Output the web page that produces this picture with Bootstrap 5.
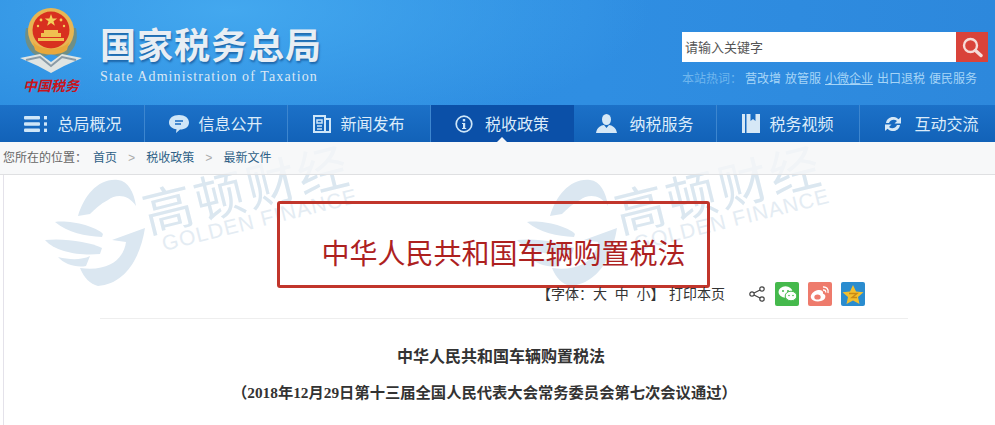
<!DOCTYPE html>
<html lang="zh">
<head>
<meta charset="UTF-8">
<meta name="viewport" content="width=device-width, initial-scale=1">
<title>国家税务总局</title>
<link href="https://cdn.jsdelivr.net/npm/bootstrap@5.3.3/dist/css/bootstrap.min.css" rel="stylesheet">
<style>
body { width: 995px; height: 425px; overflow: hidden; background: #fff; font-family: "Liberation Sans", "Noto Sans CJK SC", sans-serif; }
.site-head { height: 105px; padding: 8px 7px 0 20px; background: radial-gradient(ellipse 420px 130px at 230px 10px, #43a8ef 0%, rgba(67,168,239,0) 100%), linear-gradient(90deg, #2c8de0 0%, #2f8ee2 60%, #2d88dc 100%); }
.emblem-box { width: 62px; }
.emblem-cap { font: italic 700 14px/16px "Liberation Serif", "Noto Sans CJK SC", serif; color: #c8141c; white-space: nowrap; margin-left: 3px; margin-top: 6px; }
.brand-box { margin-left: 18px; padding-top: 19px; }
.brand-cn { font-size: 36px; line-height: 40px; font-weight: 700; letter-spacing: 1px; color: #e8eef4; text-shadow: 1px 2px 2px rgba(10,60,120,.55); white-space: nowrap; }
.brand-en { font: 14px/18px "Liberation Serif", serif; letter-spacing: 1.1px; color: #dbe8f4; margin-top: 1px; white-space: nowrap; }
.search-box { width: 306px; padding-top: 24px; }
.search-input { width: 274px; height: 30px; background: #fff; color: #555; font-size: 13px; line-height: 32px; padding-left: 3px; }
.search-btn { width: 32px; height: 30px; background: #d9433a; }
.hot-words { margin-top: 9px; font-size: 12px; line-height: 16px; color: #8cc6f2; white-space: nowrap; }
.hot-words .hot-title { margin-right: 3px; color: #6fb6ee; }
.hot-words a { color: #a6d5f7; text-decoration: none; margin-right: 4px; }
.hot-words a.hot-on { text-decoration: underline; }
.main-nav { position: relative; z-index: 1; height: 37px; padding-left: 2px; background: linear-gradient(#1c71c8, #1262b8); overflow: hidden; }
.nav-cell { flex: none; width: 143px; height: 37px; color: #dcecfa; font-size: 16px; border-right: 1px solid #3d86cf; white-space: nowrap; position: relative; padding-top: 3px; }
.nav-cell:last-child { border-right: 0; }
.nav-cell.is-on { background: #0b50a8; border-right-color: #0b50a8; }
.nav-cell.is-on::after { content: ""; position: absolute; left: 66px; bottom: 0; border: 5px solid transparent; border-bottom-color: #f5f6f8; border-top: 0; }
.nav-cell svg { margin-right: 9px; margin-top: -3px; flex: none; }
.nav-cell.gap-wide svg { margin-right: 12px; }
.page-body { position: relative; height: 283px; }
.water-mark { position: absolute; top: 8px; width: 330px; height: 150px; overflow: visible; pointer-events: none; }
.water-one { left: 40px; }
.water-two { left: 512px; }
.water-mark text { font-family: "Liberation Sans", "Noto Sans CJK SC", sans-serif; }
.crumb-bar { position: relative; height: 33px; background: rgba(245,246,248,.82); border-bottom: 1px solid #dfe0e2; font-size: 12px; line-height: 32px; padding-left: 3px; color: #666; white-space: nowrap; }
.crumb-bar a { color: #2d5f86; text-decoration: none; }
.crumb-bar i { font-style: normal; color: #aaa; margin: 0 11px; font-family: "Liberation Mono", monospace; }
.crumb-bar .crumb-lead { margin-right: 6px; }
.article-wrap { position: relative; margin-left: 3px; border-left: 1px solid #e4e2ea; padding-top: 26px; height: 250px; }
.law-box { width: 433px; height: 87px; margin-left: 273px; padding: 21px 0 0 20px; border: 3px solid #c1352b; border-radius: 3px; color: #ad211f; font-size: 28px; line-height: 60px; text-align: center; white-space: nowrap; }
.tool-line { margin-top: -6px; height: 24px; padding-left: 533px; font-size: 14px; color: #333; white-space: nowrap; }
.tool-font { width: 127px; }
.tool-print { width: 80px; margin-left: 5px; }
.share-tile { width: 24px; height: 24px; border-radius: 2px; margin-left: 9px; }
.tile-wx { background: #45b94c; margin-left: 10px; }
.tile-wb { background: #ee7b6c; }
.tile-qz { background: #2a8ccf; }
.rule-line { height: 1px; background: #eee; margin: 12px 87px 0 96px; }
.law-title { margin: 28px 0 0 393px; font: 700 16px/20px "Liberation Serif", "Noto Sans CJK SC", serif; color: #333; white-space: nowrap; }
.law-note { margin: 16px 0 0 228px; font: 700 15.3px/20px "Liberation Serif", "Noto Sans CJK SC", serif; color: #333; white-space: nowrap; }
</style>
</head>
<body>
<header class="site-head d-flex justify-content-between">
    <div class="d-flex">
        <div class="emblem-box">
            <svg width="62" height="65" viewBox="0 0 62 65">
                <path d="M6 20 C3 34 8 44 20 50 L31 46 L42 50 C54 44 59 34 56 20 Z" fill="#6f8f86"/>
                <path d="M0 50 L20 46 L31 54 L42 46 L62 50 L44 58 L31 65 L18 58 Z" fill="#dfe4e2"/>
                <path d="M6 52 L20 49 L31 58 L42 49 L56 52" fill="none" stroke="#8a9ba6" stroke-width="2"/>
                <circle cx="31" cy="23" r="23" fill="#e8b653"/>
                <circle cx="31" cy="22" r="18.500" fill="#d8301f"/>
                <path d="M31 6 l1.600 4.400 4.600 .1 -3.700 2.800 1.400 4.400 -3.900 -2.700 -3.900 2.700 1.400 -4.400 -3.700 -2.800 4.600 -.1z" fill="#f4cf5a"/>
                <circle cx="21" cy="12" r="1.400" fill="#f4cf5a"/><circle cx="41" cy="12" r="1.400" fill="#f4cf5a"/><circle cx="18" cy="18" r="1.200" fill="#f4cf5a"/><circle cx="44" cy="18" r="1.200" fill="#f4cf5a"/>
                <path d="M18 30 h26 v3 h-26z M21 25 h20 v4 h-20z M24 22 h14 v3 h-14z" fill="#f0c050"/>
                <path d="M13 34 C20 43 42 43 49 34 L47 42 C40 48 22 48 15 42 Z" fill="#e8a83c"/>
            </svg>
            <div class="emblem-cap">中国税务</div>
        </div>
        <div class="brand-box">
            <div class="brand-cn">国家税务总局</div>
            <div class="brand-en">State Administration of Taxation</div>
        </div>
    </div>
    <div class="search-box">
        <div class="d-flex">
            <div class="search-input">请输入关键字</div>
            <div class="search-btn d-flex align-items-center justify-content-center">
                <svg width="22" height="22" viewBox="0 0 22 22"><circle cx="9.500" cy="9.500" r="6.500" fill="none" stroke="#f6dcd8" stroke-width="2.400"/><path d="M14.500 14.500 L20 19.500" stroke="#f6dcd8" stroke-width="3.400" stroke-linecap="round"/></svg>
            </div>
        </div>
        <div class="hot-words d-flex"><span class="hot-title">本站热词：</span><a href="#">营改增</a><a href="#">放管服</a><a href="#" class="hot-on">小微企业</a><a href="#">出口退税</a><a href="#">便民服务</a></div>
    </div>
</header>

<nav class="main-nav d-flex">
    <div class="nav-cell d-flex align-items-center justify-content-center">
        <svg width="24" height="16" viewBox="0 0 24 16" fill="#cfe6f8"><rect x="0" y="0" width="16" height="3.400" rx="1"/><rect x="0" y="6.300" width="16" height="3.400" rx="1"/><rect x="0" y="12.600" width="16" height="3.400" rx="1"/><rect x="20" y="0" width="3" height="3.400"/><rect x="20" y="6.300" width="3" height="3.400"/><rect x="20" y="12.600" width="3" height="3.400"/></svg>总局概况
    </div>
    <div class="nav-cell d-flex align-items-center justify-content-center">
        <svg width="20" height="18" viewBox="0 0 20 18"><path d="M10 0 C16 0 20 3 20 7.500 C20 12 16 14.500 11 14.500 L7 18 L7.500 14.300 C3 13.500 0 11 0 7.500 C0 3 4 0 10 0Z" fill="#cfe6f8"/><path d="M6 6 h8 M6 9 h6" stroke="#1a6cc2" stroke-width="1.300"/></svg>信息公开
    </div>
    <div class="nav-cell d-flex align-items-center justify-content-center">
        <svg width="18" height="18" viewBox="0 0 18 18" fill="none" stroke="#cfe6f8"><path d="M1 1 h11 v16 h-11z" stroke-width="2"/><path d="M12 4 h5 v13 h-5" stroke-width="2"/><path d="M4 5 h5 v3 h-5z M4 11 h5 M4 14 h5" stroke-width="1.500"/></svg>新闻发布
    </div>
    <div class="nav-cell is-on gap-wide d-flex align-items-center justify-content-center">
        <svg width="18" height="18" viewBox="0 0 18 18"><circle cx="9" cy="9" r="7.800" fill="none" stroke="#cfe6f8" stroke-width="1.700"/><rect x="7.800" y="4" width="2.400" height="2.400" fill="#cfe6f8"/><path d="M7 8 h3.200 v5 h1 v1 h-4.200 v-1 h1 v-4 h-1z" fill="#cfe6f8"/></svg>税收政策
    </div>
    <div class="nav-cell gap-wide d-flex align-items-center justify-content-center">
        <svg width="21" height="19" viewBox="0 0 21 19"><ellipse cx="10.500" cy="5.500" rx="4.500" ry="5.500" fill="#d6e8f6"/><path d="M0 19 C1 13 5 11.500 8 11 L10.500 14 L13 11 C16 11.500 20 13 21 19Z" fill="#d6e8f6"/></svg>纳税服务
    </div>
    <div class="nav-cell d-flex align-items-center justify-content-center">
        <svg width="18" height="19" viewBox="0 0 18 19" fill="#d6e8f6"><rect x="0" y="0" width="3" height="19"/><path d="M4.500 0 h4 v7 l2.500 -2 l2.500 2 v-7 h4.500 v19 h-13.500z"/></svg>税务视频
    </div>
    <div class="nav-cell gap-wide d-flex align-items-center justify-content-center">
        <svg width="18" height="16" viewBox="0 0 18 16" fill="#d6e8f6"><path d="M2 7 C2.500 3 6 0.500 10 1 C12 1.300 13.300 2 14.500 3.300 L17 1 V7.500 H10.500 L13 5 C10.500 2.800 6.500 3.500 5 7Z"/><path d="M16 9 C15.500 13 12 15.500 8 15 C6 14.700 4.700 14 3.500 12.700 L1 15 V8.500 H7.500 L5 11 C7.500 13.200 11.500 12.500 13 9Z"/></svg>互动交流
    </div>
</nav>

<main class="page-body">
    <svg class="water-mark water-one" viewBox="0 0 330 150">
        <g fill="#dbe7f1">
            <path d="M38 66 C44 46 58 28 78 30 C88 31 94 42 96 56 C88 44 76 44 68 50 C60 54 54 60 50 64 Z"/>
            <path d="M15 72 C30 70 55 76 63 84 L62 87 C45 86 28 83 15 72Z"/>
            <path d="M5 90 C25 88 50 92 62 98 L60 104 C40 106 15 102 5 90Z"/>
            <path d="M18 107 C30 110 42 110 50 106 L46 116 C36 118 24 114 18 107Z"/>
            <path d="M105 78 L72 90 L86 92 C84 108 70 122 40 118 C44 128 50 134 58 136 C84 134 100 110 105 78Z"/>
        </g>
        <g transform="rotate(-14 110 90)">
            <text x="110" y="83" font-size="50" fill="#dbe7f0" letter-spacing="3">高顿财经</text>
            <text x="121" y="104" font-size="21" fill="#e4ecf3" letter-spacing="1">GOLDEN FINANCE</text>
        </g>
    </svg>
    <svg class="water-mark water-two" viewBox="0 0 330 150">
        <g fill="#dbe7f1">
            <path d="M38 66 C44 46 58 28 78 30 C88 31 94 42 96 56 C88 44 76 44 68 50 C60 54 54 60 50 64 Z"/>
            <path d="M15 72 C30 70 55 76 63 84 L62 87 C45 86 28 83 15 72Z"/>
            <path d="M5 90 C25 88 50 92 62 98 L60 104 C40 106 15 102 5 90Z"/>
            <path d="M18 107 C30 110 42 110 50 106 L46 116 C36 118 24 114 18 107Z"/>
            <path d="M105 78 L72 90 L86 92 C84 108 70 122 40 118 C44 128 50 134 58 136 C84 134 100 110 105 78Z"/>
        </g>
        <g transform="rotate(-14 110 90)">
            <text x="110" y="83" font-size="50" fill="#dbe7f0" letter-spacing="3">高顿财经</text>
            <text x="121" y="104" font-size="21" fill="#e4ecf3" letter-spacing="1">GOLDEN FINANCE</text>
        </g>
    </svg>
    <div class="crumb-bar"><span class="crumb-lead">您所在的位置：</span><a href="#">首页</a><i>&gt;</i><a href="#">税收政策</a><i>&gt;</i><a href="#">最新文件</a></div>
    <article class="article-wrap">
        <div class="law-box">中华人民共和国车辆购置税法</div>
        <div class="tool-line d-flex align-items-center">
            <span class="tool-font">【字体：大&nbsp;&nbsp;中&nbsp;&nbsp;小】</span>
            <span class="tool-print">打印本页</span>
            <svg width="16" height="16" viewBox="0 0 16 16" fill="none" stroke="#444" stroke-width="1.200"><circle cx="13" cy="3" r="2.200"/><circle cx="3" cy="8" r="2.200"/><circle cx="13" cy="13" r="2.200"/><path d="M5 7 L11 4 M5 9 L11 12"/></svg>
            <div class="share-tile tile-wx d-flex align-items-center justify-content-center">
                <svg width="19" height="16" viewBox="0 0 19 16"><ellipse cx="7.500" cy="6" rx="7" ry="5.800" fill="#fff"/><ellipse cx="13" cy="10" rx="5.800" ry="4.800" fill="#fff" stroke="#45b94c"/><circle cx="5" cy="5" r="1" fill="#45b94c"/><circle cx="10" cy="5" r="1" fill="#45b94c"/><circle cx="11" cy="9.500" r=".8" fill="#45b94c"/><circle cx="15" cy="9.500" r=".8" fill="#45b94c"/></svg>
            </div>
            <div class="share-tile tile-wb d-flex align-items-center justify-content-center">
                <svg width="20" height="18" viewBox="0 0 20 18"><path d="M8 5 C3 6 0 10 1 13 C2 16 7 17 11 16 C15 15 16 12 15 10 C14.500 9 13 9 13 8.500 C13.500 6 11.500 4.500 8 5Z" fill="#fff"/><ellipse cx="7.500" cy="12" rx="3.200" ry="2.600" fill="#ee7b6c"/><path d="M13 2 C16 1.500 19 4 18 8 M13 5 C15 4.800 16 6 15.600 7.500" fill="none" stroke="#fff" stroke-width="1.400"/></svg>
            </div>
            <div class="share-tile tile-qz d-flex align-items-center justify-content-center">
                <svg width="22" height="21" viewBox="0 0 22 21"><path d="M11 1 L14 7.500 L21.500 8.300 L16 13 L17.500 20 L11 16.500 L4.500 20 L6 13 L0.500 8.300 L8 7.500Z" fill="#f2bf2e"/><path d="M7 9.500 h8 l-5 4 h5" fill="none" stroke="#c98a15" stroke-width="1.400"/></svg>
            </div>
        </div>
        <div class="rule-line"></div>
        <h1 class="law-title">中华人民共和国车辆购置税法</h1>
        <p class="law-note">（2018年12月29日第十三届全国人民代表大会常务委员会第七次会议通过）</p>
    </article>
</main>
<script src="https://cdn.jsdelivr.net/npm/bootstrap@5.3.3/dist/js/bootstrap.bundle.min.js"></script>
</body>
</html>
